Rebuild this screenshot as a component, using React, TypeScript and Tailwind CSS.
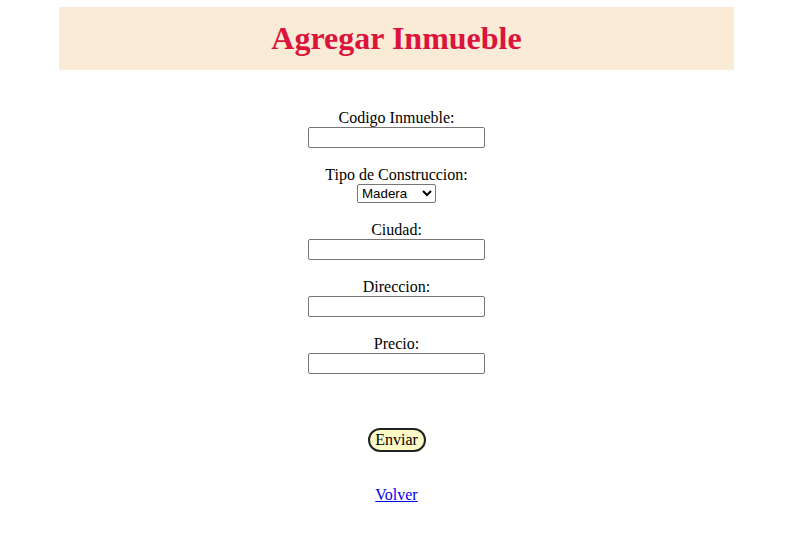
export default function App() {
  const serif = { fontFamily: '"Liberation Serif", "Times New Roman", serif' }
  const fields = ['Ciudad:', 'Direccion:', 'Precio:']
  return (
    <div className="w-[793px] bg-white text-black pt-[7px]" style={serif}>
      <div className="mx-auto w-[675px] h-[63px] bg-[#faebd7] flex items-center justify-center">
        <h1 className="text-[32px] font-bold text-[#dc143c] leading-none pb-[2px]">Agregar Inmueble</h1>
      </div>
      <form className="flex flex-col items-center mt-[39px]" onSubmit={(e) => e.preventDefault()}>
        <div className="flex flex-col items-center">
          <label className="text-[16px] leading-[18px]">Codigo Inmueble:</label>
          <input type="text" className="w-[177px] h-[21px] border border-[#767676] rounded-[2px] bg-white" />
        </div>
        <div className="flex flex-col items-center mt-[18px]">
          <label className="text-[16px] leading-[18px]">Tipo de Construccion:</label>
          <select
            className="w-[79px] h-[19px] border border-[#767676] rounded-[2px] bg-white text-[13.33px]"
            style={{ fontFamily: '"Liberation Sans", Arial, sans-serif' }}
            defaultValue="Madera"
          >
            <option>Madera</option>
            <option>Ladrillo</option>
            <option>Concreto</option>
          </select>
        </div>
        {fields.map((f) => (
          <div key={f} className="flex flex-col items-center mt-[18px]">
            <label className="text-[16px] leading-[18px]">{f}</label>
            <input type="text" className="w-[177px] h-[21px] border border-[#767676] rounded-[2px] bg-white" />
          </div>
        ))}
        <button
          type="submit"
          className="mt-[54px] w-[58px] h-[24px] rounded-full border-2 border-[#222] bg-[#fdf9c6] text-[16px] leading-none"
          style={serif}
        >
          Enviar
        </button>
        <a href="#" className="mt-[34px] text-[16px] leading-[18px] text-[#0000ee] underline">
          Volver
        </a>
      </form>
    </div>
  )
}
